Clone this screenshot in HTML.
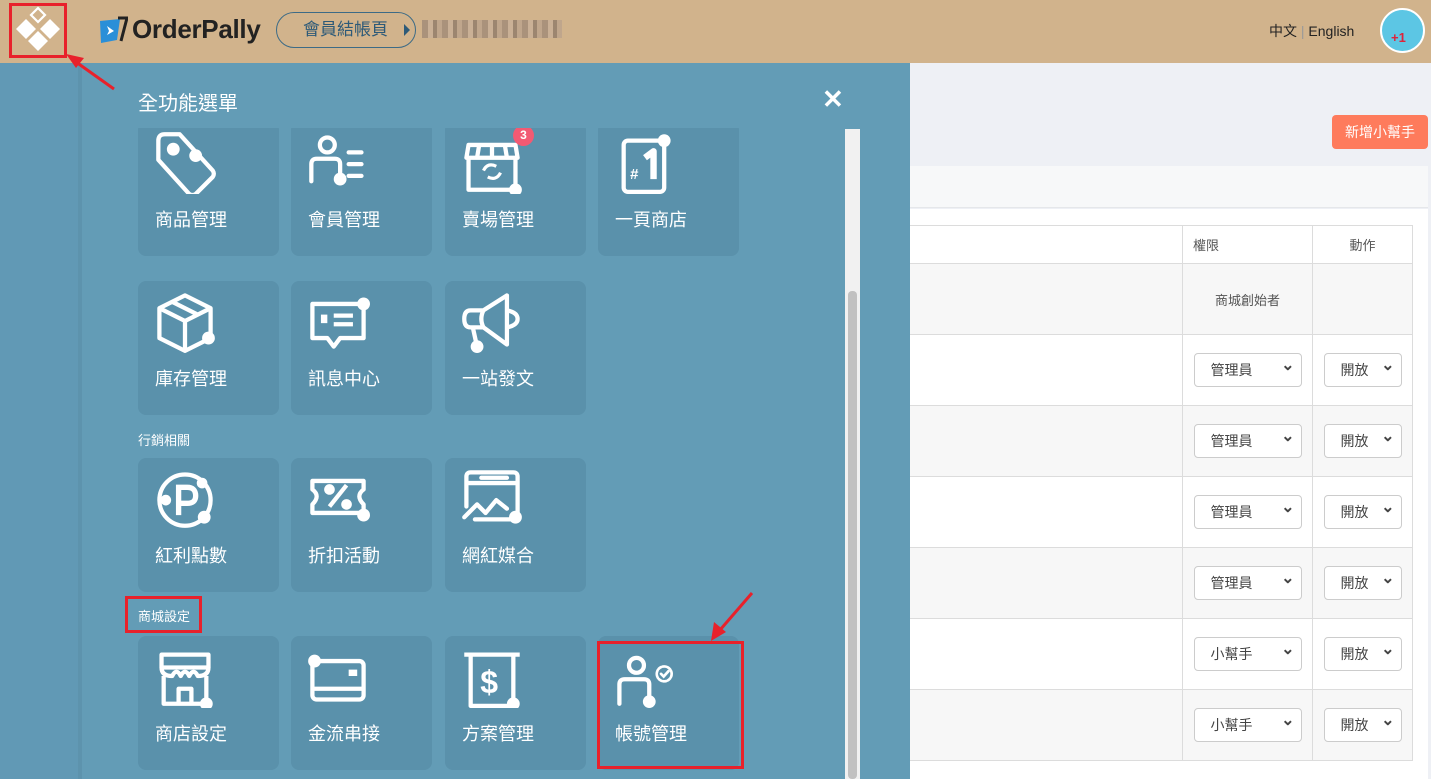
<!DOCTYPE html>
<html><head><meta charset="utf-8"><style>
*{box-sizing:border-box;margin:0;padding:0}
body{width:1431px;height:779px;overflow:hidden;position:relative;background:#eef0f5;font-family:"Liberation Sans","Noto Sans CJK TC",sans-serif}
.abs{position:absolute}
.top{left:0;top:0;width:1431px;height:63px;background:#d1b38c}
.side{left:0;top:63px;width:78px;height:716px;background:#6199b5}
.div{left:78px;top:63px;width:4px;height:716px;background:#5d93ad}
.panel{left:82px;top:63px;width:828px;height:716px;background:#639cb6}
.card{position:absolute;width:141px;height:134px;background:#5a91ab;border-radius:8px}
.card svg{position:absolute;left:15px;top:8px}
.card span{position:absolute;left:17px;top:86px;color:#fff;font-size:18px;line-height:24px}
.sec{position:absolute;left:138px;color:#fff;font-size:13px}
.red{position:absolute;border:3px solid #e8212b}
table{position:absolute;border-collapse:collapse;font-size:13px;color:#555}
td{border:1px solid #dcdcdc;text-align:center;height:71px}
.sel{display:inline-block;border:1px solid #ccc;border-radius:4px;height:34px;line-height:32px;background:#fff;text-align:left;padding-left:16px;position:relative;font-size:14px;color:#444}
.sel:after{content:"⌄";position:absolute;right:6px;top:-4px;font-size:16px;font-weight:bold}
</style></head><body>
<div class="abs top"></div>
<div class="abs side"></div>
<div class="abs" style="left:910px;top:166px;width:518px;height:42px;background:#f7f8f9;border-bottom:1px solid #e5e7ea"></div>
<div class="abs" style="left:910px;top:209px;width:518px;height:570px;background:#fff"></div>
<div class="abs" style="left:1332px;top:115px;width:96px;height:34px;background:#fe7b5c;border-radius:4px;color:#fff;font-size:14px;line-height:34px;text-align:center">新增小幫手</div>
<table style="left:880px;top:225px;width:533px">
<tr style="height:38px"><td style="height:38px;width:302px"></td><td style="height:38px;width:130px;text-align:left;padding-left:10px">權限</td><td style="height:38px">動作</td></tr>
<tr style="background:#f7f7f7"><td></td><td>商城創始者</td><td></td></tr>
<tr><td></td><td><span class="sel" style="width:108px">管理員</span></td><td><span class="sel" style="width:78px">開放</span></td></tr>
<tr style="background:#f7f7f7"><td></td><td><span class="sel" style="width:108px">管理員</span></td><td><span class="sel" style="width:78px">開放</span></td></tr>
<tr><td></td><td><span class="sel" style="width:108px">管理員</span></td><td><span class="sel" style="width:78px">開放</span></td></tr>
<tr style="background:#f7f7f7"><td></td><td><span class="sel" style="width:108px">管理員</span></td><td><span class="sel" style="width:78px">開放</span></td></tr>
<tr><td></td><td><span class="sel" style="width:108px">小幫手</span></td><td><span class="sel" style="width:78px">開放</span></td></tr>
<tr style="background:#f7f7f7"><td></td><td><span class="sel" style="width:108px">小幫手</span></td><td><span class="sel" style="width:78px">開放</span></td></tr>
</table>
<div class="abs panel"></div>
<div class="abs div"></div>
<svg class="abs" style="left:12px;top:5px" width="52" height="50" viewBox="0 0 52 50"><path d="M26 3 L33 10 L26 17 L19 10Z" fill="none" stroke="#fff" stroke-width="2.2"/><path d="M14 14 L24 24 L14 34 L4 24Z M38 14 L48 24 L38 34 L28 24Z M26 26 L36 36 L26 46 L16 36Z" fill="#fff"/></svg>
<svg class="abs" style="left:98px;top:16px" width="30" height="28" viewBox="0 0 30 28"><path d="M2 5 L22 3 L19 24 L3 27Z" fill="#2a8fd8"/><path d="M9 10 L16 15 L9 19 L11 15Z" fill="#fff"/><path d="M20 2 L29 2 L23 25" fill="none" stroke="#222" stroke-width="3"/></svg>
<div class="abs" style="left:132px;top:14px;font-size:26px;font-weight:bold;color:#222;letter-spacing:-0.3px">OrderPally</div>
<div class="abs" style="left:276px;top:12px;width:140px;height:36px;border:1.5px solid #3d6b86;border-radius:18px;color:#2d5a78;font-size:17px;line-height:33px;padding-left:26px">會員結帳頁<span style="position:absolute;right:5px;top:11px;border-left:6px solid #2d5a78;border-top:6px solid transparent;border-bottom:6px solid transparent"></span></div>
<div class="abs" style="left:422px;top:20px;width:140px;height:18px;background:repeating-linear-gradient(90deg,#a08a77 0 6px,#c8b098 6px 11px,#8f7a69 11px 15px,#bba38c 15px 20px);opacity:.8"></div>
<div class="abs" style="left:1269px;top:21px;font-size:14px;color:#222">中文 <span style="color:#999">|</span> English</div>
<div class="abs" style="left:1380px;top:8px;width:45px;height:45px;border-radius:50%;background:#5cc6e4;border:2px solid #fff;color:#e0223a;font-weight:bold;font-size:13px;padding:20px 0 0 9px">+1</div>
<div class="abs" style="left:138px;top:87px;color:#fff;font-size:20px">全功能選單</div>
<div class="abs" style="left:822px;top:84px;color:#fff;font-size:26px;font-weight:bold">✕</div>
<div class="abs" style="left:845px;top:129px;width:15px;height:650px;background:#f1f1f1"></div>
<div class="abs" style="left:848px;top:291px;width:9px;height:488px;background:#c1c1c1;border-radius:4px"></div>
<div class="abs" style="left:120px;top:128px;width:720px;height:651px;overflow:hidden">
<div style="position:absolute;left:-120px;top:-128px">
<div class="card" style="left:138px;top:122px"><svg width="64" height="64" viewBox="0 0 60 60" fill="none" stroke="#fff" stroke-width="4" stroke-linecap="round" stroke-linejoin="round"><path d="M5 10 Q5 4 11 4 L25 4 L56 38 Q58 41 56 44 L40 60 Q37 62 34 60 L5 28Z"/><circle cx="19" cy="18" r="4" fill="#fff"/><circle cx="40" cy="24" r="4" fill="#fff"/></svg><span>商品管理</span></div>
<div class="card" style="left:291px;top:122px"><svg width="64" height="64" viewBox="0 0 60 60" fill="none" stroke="#fff" stroke-width="4" stroke-linecap="round"><circle cx="20" cy="14" r="7"/><path d="M5 48 L5 32 Q5 27 10 27 L27 27 Q32 27 32 32 L32 44"/><path d="M40 21 L52 21 M40 32 L52 32 M40 43 L52 43"/><circle cx="32" cy="46" r="4" fill="#fff"/></svg><span>會員管理</span></div>
<div class="card" style="left:445px;top:122px"><svg width="64" height="64" viewBox="0 0 60 60" fill="none" stroke="#fff" stroke-width="4" stroke-linejoin="round"><path d="M8 14 L52 14 L54 26 L6 26Z"/><path d="M18 14 L16 26 M30 14 L30 26 M42 14 L44 26"/><path d="M8 26 L8 56 L52 56 L52 26"/><path d="M22 38 Q26 30 34 34 M38 40 Q34 48 26 44" stroke-width="3"/><circle cx="52" cy="56" r="4" fill="#fff"/></svg><span>賣場管理</span><div style="position:absolute;left:68px;top:3px;width:21px;height:21px;border-radius:50%;background:#f25a73;color:#fff;font-size:12px;text-align:center;line-height:21px;font-weight:bold">3</div></div>
<div class="card" style="left:598px;top:122px"><svg width="64" height="64" viewBox="0 0 60 60" fill="none" stroke="#fff" stroke-width="4" stroke-linejoin="round"><rect x="10" y="10" width="38" height="48" rx="4"/><text x="16" y="46" fill="#fff" stroke="none" font-size="14" font-weight="bold" font-family="Liberation Sans">#</text><path d="M30 26 L38 20 L38 46" stroke-width="6"/><circle cx="48" cy="10" r="4" fill="#fff"/></svg><span>一頁商店</span></div>
<div class="card" style="left:138px;top:281px"><svg width="64" height="64" viewBox="0 0 60 60" fill="none" stroke="#fff" stroke-width="4" stroke-linejoin="round"><path d="M30 6 L54 18 L54 46 L30 58 L6 46 L6 18Z"/><path d="M6 18 L30 30 L54 18 M30 30 L30 58 M18 12 L42 24"/><circle cx="52" cy="46" r="4" fill="#fff"/></svg><span>庫存管理</span></div>
<div class="card" style="left:291px;top:281px"><svg width="64" height="64" viewBox="0 0 60 60" fill="none" stroke="#fff" stroke-width="4" stroke-linejoin="round"><path d="M6 14 L54 14 L54 46 L32 46 L26 54 L20 46 L6 46Z"/><rect x="14" y="24" width="6" height="8" fill="#fff" stroke="none"/><path d="M26 25 L44 25 M26 33 L44 33"/><circle cx="54" cy="14" r="4" fill="#fff"/></svg><span>訊息中心</span></div>
<div class="card" style="left:445px;top:281px"><svg width="64" height="64" viewBox="0 0 60 60" fill="none" stroke="#fff" stroke-width="4" stroke-linejoin="round"><path d="M44 6 L44 52 L22 36 L10 36 Q4 36 4 28 Q4 20 10 20 L22 20Z"/><path d="M44 20 Q54 22 54 28 Q54 34 44 36 M22 20 Q18 28 22 36 M12 36 L16 54"/><circle cx="16" cy="54" r="4" fill="#fff"/></svg><span>一站發文</span></div>
<div class="card" style="left:138px;top:458px"><svg width="64" height="64" viewBox="0 0 60 60" fill="none" stroke="#fff" stroke-width="4"><circle cx="30" cy="32" r="24"/><path d="M24 46 L24 20 L32 20 Q40 20 40 28 Q40 35 32 35 L24 35" stroke-width="5"/><circle cx="12" cy="32" r="3" fill="#fff"/><circle cx="46" cy="16" r="3" fill="#fff"/><circle cx="48" cy="48" r="4" fill="#fff"/></svg><span>紅利點數</span></div>
<div class="card" style="left:291px;top:458px"><svg width="64" height="64" viewBox="0 0 60 60" fill="none" stroke="#fff" stroke-width="4" stroke-linejoin="round"><path d="M6 14 L54 14 L54 22 Q46 28 54 36 L54 44 L6 44 L6 36 Q14 28 6 22Z"/><path d="M22 38 L38 18"/><circle cx="22" cy="22" r="3" fill="#fff"/><circle cx="38" cy="36" r="3" fill="#fff"/><circle cx="54" cy="46" r="4" fill="#fff"/></svg><span>折扣活動</span></div>
<div class="card" style="left:445px;top:458px"><svg width="64" height="64" viewBox="0 0 60 60" fill="none" stroke="#fff" stroke-width="4" stroke-linejoin="round" stroke-linecap="round"><path d="M6 38 L6 10 Q6 6 10 6 L50 6 Q54 6 54 10 L54 46 M6 16 L54 16 M20 11 L44 11"/><path d="M4 48 L16 36 L24 44 L34 32 L44 40"/><path d="M14 50 L52 50"/><circle cx="52" cy="48" r="4" fill="#fff"/></svg><span>網紅媒合</span></div>
<div class="card" style="left:138px;top:636px"><svg width="64" height="64" viewBox="0 0 60 60" fill="none" stroke="#fff" stroke-width="4" stroke-linejoin="round"><path d="M8 10 L52 10 L52 22 L8 22Z"/><path d="M8 22 Q8 30 18 30 Q22 22 26 30 Q30 22 34 30 Q38 22 42 30 Q52 30 52 22"/><path d="M10 30 L10 56 L50 56 L50 30 M24 56 L24 42 L36 42 L36 56"/><circle cx="50" cy="56" r="4" fill="#fff"/></svg><span>商店設定</span></div>
<div class="card" style="left:291px;top:636px"><svg width="64" height="64" viewBox="0 0 60 60" fill="none" stroke="#fff" stroke-width="4" stroke-linejoin="round"><rect x="6" y="16" width="48" height="36" rx="4"/><path d="M6 42 L54 42"/><rect x="40" y="24" width="8" height="6" fill="#fff" stroke="none"/><circle cx="8" cy="16" r="4" fill="#fff"/></svg><span>金流串接</span></div>
<div class="card" style="left:445px;top:636px"><svg width="64" height="64" viewBox="0 0 60 60" fill="none" stroke="#fff" stroke-width="4" stroke-linejoin="round"><path d="M4 10 L56 10 M10 10 L10 58 L50 58 L50 10"/><text x="19" y="46" fill="#fff" stroke="none" font-size="30" font-weight="bold" font-family="Liberation Sans">$</text><circle cx="50" cy="56" r="4" fill="#fff"/></svg><span>方案管理</span></div>
<div class="card" style="left:598px;top:636px"><svg width="64" height="64" viewBox="0 0 60 60" fill="none" stroke="#fff" stroke-width="4" stroke-linecap="round"><circle cx="22" cy="20" r="7"/><path d="M6 56 L6 38 Q6 33 11 33 L29 33 Q34 33 34 38 L34 52"/><circle cx="34" cy="54" r="4" fill="#fff"/><circle cx="48" cy="28" r="7" stroke-width="2.5" stroke-dasharray="3 1.5"/><path d="M45 28 L47.5 30.5 L52 25.5" stroke-width="2.5"/></svg><span>帳號管理</span></div>
</div></div>
<div class="sec" style="top:430px">行銷相關</div>
<div class="sec" style="top:606px">商城設定</div>
<div class="red" style="left:9px;top:3px;width:58px;height:55px"></div>
<div class="red" style="left:125px;top:596px;width:77px;height:37px"></div>
<div class="red" style="left:597px;top:641px;width:147px;height:128px"></div>
<svg class="abs" style="left:0;top:0" width="900" height="700"><path d="M114 89 L76 62" stroke="#e8212b" stroke-width="3"/><path d="M66 54 L84 58 L76 68Z" fill="#e8212b"/><path d="M752 593 L720 630" stroke="#e8212b" stroke-width="3"/><path d="M711 641 L714 622 L726 632Z" fill="#e8212b"/></svg>
</body></html>
